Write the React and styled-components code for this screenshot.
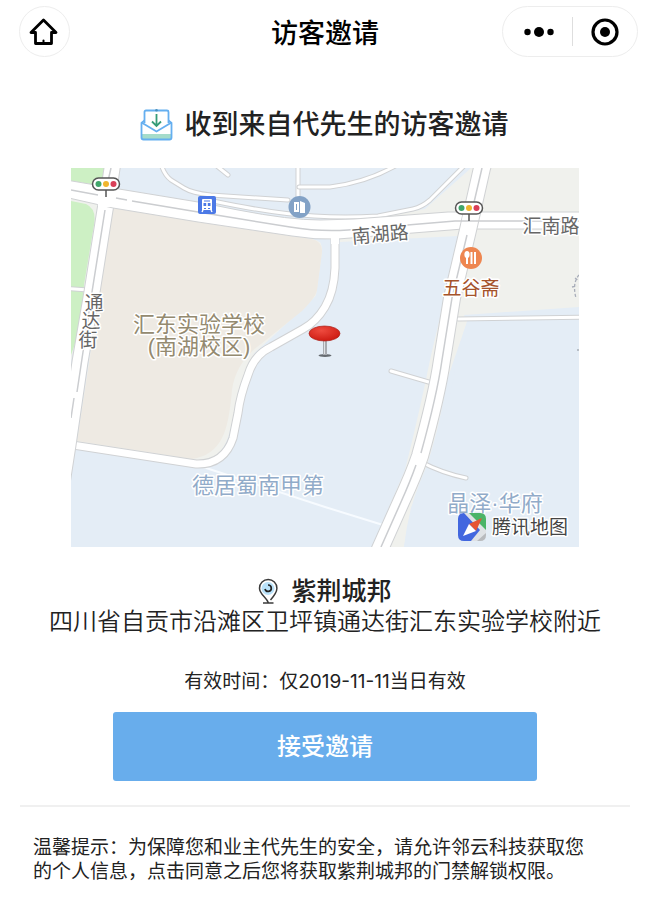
import React from "react";
import styled, { createGlobalStyle } from "styled-components";

const Global = createGlobalStyle`
  *, *::before, *::after { box-sizing: border-box; }
  body {
    margin: 0;
    background: #fff;
    color: #222;
    font-family: "Liberation Sans", "Noto Sans CJK SC", sans-serif;
  }
  h1, h2, p { margin: 0; }
  button { font: inherit; cursor: pointer; }
`;

const Page = styled.div`
  display: flex;
  flex-direction: column;
`;

const NavBar = styled.header`
  display: grid;
  grid-template-columns: 1fr auto 1fr;
  align-items: center;
  padding: 6px 12px;
`;

const HomeButton = styled.button`
  display: flex;
  align-items: center;
  justify-content: center;
  width: 51px;
  height: 51px;
  margin-left: 7px;
  padding: 0;
  border: 1px solid #ededed;
  border-radius: 50%;
  background: #fff;
`;

const NavTitle = styled.h1`
  font-size: 27px;
  line-height: 44px;
  padding-top: 4px;
  font-weight: 500;
  color: #000;
`;

const Capsule = styled.div`
  display: flex;
  align-items: center;
  justify-self: end;
  width: 136px;
  height: 51px;
  border: 1px solid #ededed;
  border-radius: 26px;
`;

const CapsuleButton = styled.button`
  display: flex;
  flex: 1;
  align-items: center;
  justify-content: center;
  height: 100%;
  padding: ${(p) => (p.$leading ? "0 0 0 4px" : "0")};
  border: 0;
  background: none;
`;

const CapsuleDivider = styled.span`
  width: 1px;
  height: 29px;
  background: #dedede;
`;

const Main = styled.main`
  display: flex;
  flex-direction: column;
`;

const IconLine = styled.div`
  display: flex;
  align-items: center;
  justify-content: center;
  gap: ${(p) => p.$gap}px;
`;

const Invitation = styled(IconLine)`
  margin-top: 42px;
  padding-right: 2px;
`;

const Heading = styled.h2`
  font-size: ${(p) => p.$size}px;
  line-height: ${(p) => p.$line}px;
  font-weight: 500;
`;

const MapFrame = styled.section`
  margin: 23px 71px 0;
`;

const MapDrawing = styled.svg`
  display: block;
  width: 100%;
  height: auto;
  font-family: "Liberation Sans", "Noto Sans CJK SC", sans-serif;
`;

const MapLabel = styled.text`
  font-size: ${(p) => p.$size}px;
  font-weight: ${(p) => p.$weight || 400};
  fill: ${(p) => p.$color};
  stroke: #fff;
  stroke-width: 3px;
  stroke-linejoin: round;
  paint-order: stroke;
  text-anchor: middle;
`;

const Place = styled.section`
  margin-top: 28px;
  text-align: center;
`;

const Address = styled.p`
  font-size: 24px;
  line-height: 30px;
  font-weight: 350;
`;

const Validity = styled.p`
  margin-top: 33px;
  font-family: Inter, "Noto Sans CJK SC", sans-serif;
  font-size: 19px;
  line-height: 24px;
  text-align: center;
`;

const AcceptButton = styled.button`
  height: 69px;
  margin: 18px 113px 0;
  padding: 0 0 4px;
  border: 0;
  border-radius: 3px;
  background: #68adec;
  color: #fff;
  font-size: 24px;
  font-weight: 500;
`;

const Notice = styled.footer`
  margin: 24px 20px 0;
  padding: 29px 32px 24px 13px;
  border-top: 2px solid #f0f0f0;
  font-size: 19px;
  line-height: 24px;
`;

function HomeIcon() {
  return (
    <svg width="32" height="28" viewBox="0 0 32 28" fill="none" stroke="#000" strokeWidth="2.8" strokeLinejoin="round" strokeLinecap="round" aria-hidden="true">
      <path d="M14.500 2 L27 14.500 H22.500 V25.500 H6.500 V14.500 H2 Z" />
      <path d="M14.500 22.500 V25" strokeWidth="2" />
    </svg>
  );
}

function EnvelopeIcon() {
  return (
    <svg width="33" height="33" viewBox="0 0 33 33" fill="none" aria-hidden="true">
      <path d="M2 25 H31 V30 H2 Z" fill="#a5dccb" />
      <path d="M4.500 14 V3 Q4.500 1.500 6 1.500 H27 Q28.500 1.500 28.500 3 V14" stroke="#65aff0" strokeWidth="1.800" />
      <path d="M4.500 11.500 L1.500 14 V28.500 Q1.500 30.500 3.500 30.500 H29.500 Q31.500 30.500 31.500 28.500 V14 L28.500 11.500" stroke="#65aff0" strokeWidth="1.800" />
      <path d="M1.500 13.500 L16.500 22.500 L31.500 13.500" stroke="#65aff0" strokeWidth="1.800" />
      <path d="M16.500 5 V17 M12 12.500 L16.500 17 L21 12.500" stroke="#369c78" strokeWidth="1.800" />
      <circle cx="16.500" cy="1.300" r="1.300" fill="#4b91bc" />
    </svg>
  );
}

function PinIcon() {
  return (
    <svg width="21" height="27" viewBox="0 0 21 27" fill="none" aria-hidden="true">
      <circle cx="10" cy="10.500" r="6.500" fill="#b9e2fa" />
      <path d="M8 25 H5 M8 25 H15.500 M10.500 25 C8.500 19 1.500 16.500 1.500 10.200 A8.700 8.700 0 0 1 18.900 10.200 C18.900 14.500 16 18 12.500 22" stroke="#3b3b3b" strokeWidth="1.500" />
      <path d="M10 7 A3.200 3.200 0 1 1 7 11" stroke="#222" strokeWidth="1.700" />
    </svg>
  );
}

function Road({ d, width }) {
  return (
    <g fill="none" strokeLinejoin="round" strokeLinecap="round">
      <path d={d} stroke="#d0d2d4" strokeWidth={width + 2} />
      <path d={d} stroke="#fff" strokeWidth={width} />
    </g>
  );
}

function TrafficLight({ x, y }) {
  return (
    <g transform={`translate(${x} ${y})`}>
      <path d="M0 6 V13" stroke="#555" strokeWidth="1.500" />
      <rect x="-13.500" y="-6" width="27" height="12" rx="6" fill="#fff" stroke="#555" strokeWidth="1.500" />
      <circle cx="-7.500" r="3" fill="#41a66b" />
      <circle r="3" fill="#efb52e" />
      <circle cx="7.500" r="3" fill="#d93f58" />
    </g>
  );
}

const NANHU = "M60 179 L72 181 L113 188 L198 202 L238 210 Q290 220 320 220 L354 219 L448 212 H590 V229 H463 L338 239 Q315 240 292 236 L198 222 L113 208 L60 196 Z";
const HUINAN_NS = "M486 155 L482 168 L468 230 L452 298 L442 360 Q437 395 420 456 Q414 474 401 502 L376 558";
const TONGDA = "M114 155 L110 182 L105 210 L92 292 L80 362 L68 445 L61 490";
const LOOP = "M335 238 V268 Q334 292 325 307 Q316 322 303 329 L271 347 Q254 355 248 375 Q240 396 238 413 L233 438 Q224 465 196 464 L66 444";

function CityMap() {
  return (
    <MapDrawing viewBox="71 168 508 379" role="img" aria-label="紫荆城邦">
      <rect x="71" y="168" width="508" height="379" fill="#e4edf6" />
      <path d="M71 168 H106 L103 186 L71 181 Z" fill="#cdf0c4" />
      <path d="M71 198 L98 203 L85 290 L71 362 Z" fill="#eff1ed" />
      <path d="M71 201 L86 204 Q97 209 94 225 L84 285 Q81 330 71 355 Z" fill="#cdf0c4" />
      <path d="M471 168 H579 V307 L464 315 L467 322 L447 380 Q436 450 411 508 L404 547 H372 L405 470 Q420 410 430 360 L458 236 L340 242 V225 L425 209 Z" fill="#f0f1ed" />
      <path d="M340 244 L457 237 L437 330 L418 400 H340 Z" fill="#e4edf6" />
      <path d="M404 547 Q409 500 430 460 Q451 405 458 350 L467 322 H579 V547 Z" fill="#e4edf6" />
      <path d="M112 208 L316 240 L323 244 L316 296 L256 352 L244 375 L230 430 Q224 460 196 463 L77 443 Z" fill="#f0f1ed" />
      <path d="M320 240 H332 V275 L320 309 L302 327 L252 355 L302 312 Q317 297 318 290 L323 252 Z" fill="#e4edf6" />
      <path d="M113 208 L312 239 Q323 242 322 252 L317 290 Q316 297 302 311 L261 344 Q236 362 232 390 Q229 425 222 438 Q213 456 192 459 L77 441 Z" fill="#eeeae3" />

      <path d="M200 466 L325 507 L383 525" fill="none" stroke="#f7fbff" strokeWidth="2" />
      <Road d="M298 160 V204" width={3} />
      <Road d="M299 187 H330 Q370 182 402 162" width={3} />
      <Road d="M160 160 Q163 174 171 180 L184 188 Q192 193 211 195 L288 200" width={3} />
      <Road d="M213 163 L228 175" width={3} />
      <Road d="M472 158 L430 200 Q422 207 413 209 L378 216 Q345 218 314 216 Q275 214 213 201" width={3} />
      <Road d="M60 288 L88 290" width={3} />
      <Road d="M391 371 L432 383" width={3} />
      <Road d="M421 462 Q442 473 466 478" width={3} />
      <Road d="M458 319 L590 317" width={3} />
      <Road d={LOOP} width={7} />
      <Road d={TONGDA} width={15} />
      <path d={NANHU} fill="#fff" stroke="#d0d2d4" />
      <Road d={HUINAN_NS} width={16} />
      <path d="M97 187 H118 L115 207 H98 Z M463 214 L480 213 L473 229 L461 229 Z M331 231 H339 V244 H331 Z" fill="#fff" />
      <g fill="none" stroke="#cbcdd0" strokeWidth="1.500">
        <path d="M71 190 L98 195 M116 198 L127 200 M132 201 L204 213 L290 227 Q320 232 348 230 L455 221 H579" />
        <path d="M111 168 L108 181 M105 210 L92 292 L77 392 M74 398 L71 418" />
        <path d="M482 168 L472 211 M467 235 L452 298 L442 360 Q437 395 421 453 M416 465 Q410 482 401 502 L381 547" />
      </g>

      <TrafficLight x={106} y={184} />
      <TrafficLight x={469} y={208} />

      <g transform="translate(198 196)">
        <rect width="18" height="18" rx="2" fill="#4c79e6" />
        <path d="M4 4 Q4 3 5 3 H13 Q14 3 14 4 V14 H4 Z M5.500 7 V10 H8.200 V7 Z M9.800 7 V10 H12.500 V7 Z" fill="#fff" fillRule="evenodd" />
        <path d="M6 5 H12 M6 12.500 H8 M10 12.500 H12" stroke="#4c79e6" strokeWidth="1.200" />
        <path d="M5 14 L4 16 M13 14 L14 16" stroke="#fff" strokeWidth="1.400" />
      </g>
      <g>
        <circle cx="299.500" cy="207" r="11" fill="#83a2c6" />
        <path d="M294 202 H299 V212 H294 Z M300 201 L305 203 V213 H300 Z" fill="#fff" />
        <path d="M296.500 204 V210" stroke="#83a2c6" />
      </g>
      <g>
        <circle cx="471" cy="258" r="11" fill="#ee8650" />
        <ellipse cx="467" cy="254.500" rx="2.600" ry="3.600" fill="#fff" />
        <path d="M467 256 V264 M471.500 252 V264 M475 252 V264" stroke="#fff" strokeWidth="2" />
      </g>
      <path d="M579 275 Q572 283 576 298 M575 278 L579 281 M572 287 L577 286" fill="none" stroke="#a8adb9" strokeWidth="1.300" strokeDasharray="3 2" />
      <path d="M577 350 H579" stroke="#888e96" />

      <MapLabel x="199" y="332" $size={22} $color="#948a70">汇东实验学校</MapLabel>
      <MapLabel x="199" y="354" $size={22} $color="#948a70">(南湖校区)</MapLabel>
      <MapLabel $size={19} $color="#666">
        <tspan x="94" y="310">通</tspan>
        <tspan x="91" y="328">达</tspan>
        <tspan x="88" y="347">街</tspan>
      </MapLabel>
      <MapLabel x="380" y="241" transform="rotate(-5 380 233)" $size={19} $color="#666">南湖路</MapLabel>
      <MapLabel x="551" y="233" $size={19} $color="#666">汇南路</MapLabel>
      <MapLabel x="471" y="295" $size={19} $color="#a5532b">五谷斋</MapLabel>
      <MapLabel x="258" y="493" $size={22} $color="#91abc9">德居蜀南甲第</MapLabel>
      <MapLabel x="495" y="511" $size={22} $color="#91abc9">晶泽·华府</MapLabel>

      <g transform="translate(458 513)">
        <rect width="28" height="28" rx="6" fill="#dfe2e5" />
        <path d="M6 0 L22 17 L13 28 H6 Q0 28 0 22 V6 Q0 0 6 0 Z" fill="#4267df" />
        <path d="M11 0 H22 Q28 0 28 6 V17 L24 13 Z" fill="#4bb468" />
        <path d="M19 28 L28 20 V22 Q28 28 22 28 Z" fill="#b8babd" />
        <path d="M24 5 L18 18 L11 11 Z" fill="#e65335" />
        <path d="M11 11 L18 18 L5 23 Z" fill="#fff" />
      </g>
      <MapLabel x="530" y="534" $size={19} $color="#444">腾讯地图</MapLabel>

      <defs>
        <radialGradient id="pinHead" cx="0.4" cy="0.3" r="0.8">
          <stop offset="0" stopColor="#ee4b3f" />
          <stop offset="1" stopColor="#c9150d" />
        </radialGradient>
      </defs>
      <ellipse cx="325" cy="355.500" rx="6.500" ry="1.500" fill="#666b70" />
      <path d="M323 338 H327 V355 H323 Z" fill="#a7abb0" />
      <path d="M324.500 338 V354" stroke="#dfe2e5" />
      <ellipse cx="324.500" cy="333.500" rx="15.500" ry="7.500" fill="url(#pinHead)" stroke="#aa211a" strokeWidth="0.700" />
    </MapDrawing>
  );
}

export default function App() {
  return (
    <Page>
      <Global />
      <NavBar>
        <HomeButton aria-label="首页"><HomeIcon /></HomeButton>
        <NavTitle>访客邀请</NavTitle>
        <Capsule>
          <CapsuleButton $leading aria-label="更多">
            <svg width="30" height="12" viewBox="0 0 30 12" aria-hidden="true">
              <circle cx="3.500" cy="6" r="3.200" />
              <circle cx="15" cy="6" r="5" />
              <circle cx="26.500" cy="6" r="3.200" />
            </svg>
          </CapsuleButton>
          <CapsuleDivider />
          <CapsuleButton aria-label="关闭">
            <svg width="28" height="28" viewBox="0 0 28 28" aria-hidden="true">
              <circle cx="14" cy="14" r="12" fill="none" stroke="#000" strokeWidth="3.200" />
              <circle cx="14" cy="14" r="5" />
            </svg>
          </CapsuleButton>
        </Capsule>
      </NavBar>
      <Main>
        <Invitation $gap={12}>
          <EnvelopeIcon />
          <Heading $size={27} $line={40}>收到来自代先生的访客邀请</Heading>
        </Invitation>
        <MapFrame><CityMap /></MapFrame>
        <Place>
          <IconLine $gap={12}>
            <PinIcon />
            <Heading $size={25} $line={32}>紫荆城邦</Heading>
          </IconLine>
          <Address>四川省自贡市沿滩区卫坪镇通达街汇东实验学校附近</Address>
        </Place>
        <Validity>有效时间：仅2019-11-11当日有效</Validity>
        <AcceptButton>接受邀请</AcceptButton>
      </Main>
      <Notice>
        <p>温馨提示：为保障您和业主代先生的安全，请允许邻云科技获取您的个人信息，点击同意之后您将获取紫荆城邦的门禁解锁权限。</p>
      </Notice>
    </Page>
  );
}
